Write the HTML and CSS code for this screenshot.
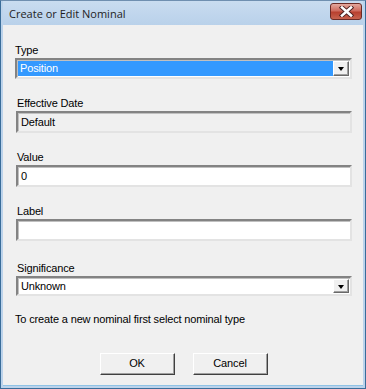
FILE: index.html
```html
<!DOCTYPE html>
<html>
<head>
    <title>Create or Edit Nominal</title>
    <meta name="viewport" content="width=device-width, initial-scale=1.0">
    <link rel="stylesheet" href="styles.css">
</head>
<body>
    <div class="window">
        <div class="title-bar">
            <span class="title">Create or Edit Nominal</span>
            <div class="close-btn">
                <svg width="17" height="11" viewBox="0 0 17 11">
                    <path d="M4 1.5 L13 9.5 M13 1.5 L4 9.5" stroke="#4a2020" stroke-width="4.4" stroke-linecap="square"/>
                    <path d="M4 1.5 L13 9.5 M13 1.5 L4 9.5" stroke="#ffffff" stroke-width="2.6" stroke-linecap="square"/>
                </svg>
            </div>
        </div>

        <div class="client">
            <div class="field field-type">
                <div class="label">Type</div>
                <div class="combo">
                    <div class="combo-text selected">Position</div>
                    <div class="drop-btn"><span class="arrow"></span></div>
                </div>
            </div>

            <div class="field">
                <div class="label">Effective Date</div>
                <div class="edit disabled">Default</div>
            </div>

            <div class="field">
                <div class="label">Value</div>
                <div class="edit">0</div>
            </div>

            <div class="field field-label">
                <div class="label">Label</div>
                <div class="edit"></div>
            </div>

            <div class="field field-sig">
                <div class="label">Significance</div>
                <div class="combo">
                    <div class="combo-text">Unknown</div>
                    <div class="drop-btn"><span class="arrow"></span></div>
                </div>
            </div>

            <p class="hint">To create a new nominal first select nominal type</p>

            <div class="buttons">
                <div class="button">OK</div>
                <div class="button">Cancel</div>
            </div>
        </div>
    </div>
</body>
</html>
```

FILE: styles.css
```css
body {
    margin: 0;
    background-color: #f0f0f0;
    font-family: 'Liberation Sans', Arial, sans-serif;
    font-size: 11px;
    letter-spacing: -0.15px;
    color: #000;
}

.window {
    width: 366px;
    height: 389px;
    box-sizing: border-box;
    border: 1px solid #3a6d9a;
    border-top-color: #6f8fb0;
    background-color: #bcd3eb;
    padding: 0 2px 2px 2px;
    display: flex;
    flex-direction: column;
}

.title-bar {
    height: 24px;
    display: flex;
    align-items: center;
    justify-content: space-between;
    background: linear-gradient(#c9dcf0, #b9d1ea);
    padding: 0 1px 0 6px;
}

.title {
    font-family: 'Open Sans', 'Noto Sans', sans-serif;
    font-size: 11px;
    letter-spacing: 0;
    color: #1e1e1e;
    margin-top: 1px;
}

.close-btn {
    width: 30px;
    height: 15px;
    margin-top: -3px;
    border: 1px solid #6b2a25;
    border-radius: 3px;
    background: linear-gradient(#e3a89d, #cf6b5e 45%, #b8402f 55%, #c7634f);
    display: flex;
    align-items: center;
    justify-content: center;
}

.client {
    flex: 1;
    background-color: #f0f0f0;
    padding: 19px 11px 0 12px;
    border-bottom: 1px solid #8fc3e6;
}

.field {
    margin-bottom: 18px;
}

.field-label {
    margin-bottom: 21px;
}

.field-sig {
    margin-bottom: 17px;
}

.label {
    height: 13px;
    line-height: 13px;
    margin-bottom: 1px;
    padding-left: 2px;
}

.field-type .label {
    padding-left: 0;
}

.edit,
.combo {
    height: 22px;
    box-sizing: border-box;
    background-color: #fff;
    border: 2px solid;
    border-color: #838383 #e3e3e3 #e3e3e3 #838383;
    box-shadow: inset 1px 1px 0 #c0c0c0;
    line-height: 18px;
    padding-left: 3px;
    margin-left: 1px;
}

.edit.disabled {
    background-color: #f0f0f0;
}

.combo {
    display: flex;
    align-items: stretch;
    height: 21px;
    padding: 1px;
    margin-left: 0;
}

.field-sig .combo {
    height: 20px;
    margin-left: 1px;
}

.combo-text {
    flex: 1;
    line-height: 15px;
    padding-left: 2px;
}

.combo-text.selected {
    background-color: #3399ff;
    color: #fff;
}

.drop-btn {
    width: 16px;
    box-sizing: border-box;
    background-color: #f0f0f0;
    border: 1px solid;
    border-color: #fff #696969 #696969 #fff;
    box-shadow: inset -1px -1px 0 #a0a0a0;
    display: flex;
    align-items: center;
    justify-content: center;
}

.arrow {
    width: 0;
    height: 0;
    border-left: 3.5px solid transparent;
    border-right: 3.5px solid transparent;
    border-top: 4px solid #000;
    margin-top: 1px;
}

.hint {
    margin: 0;
    height: 13px;
    line-height: 13px;
}

.buttons {
    display: flex;
    justify-content: center;
    gap: 18px;
    margin-top: 27px;
}

.button {
    width: 75px;
    height: 22px;
    box-sizing: border-box;
    border: 1px solid;
    border-color: #fff #404040 #404040 #fff;
    box-shadow: inset -1px -1px 0 #a0a0a0;
    background-color: #f0f0f0;
    text-align: center;
    line-height: 19px;
}
```
